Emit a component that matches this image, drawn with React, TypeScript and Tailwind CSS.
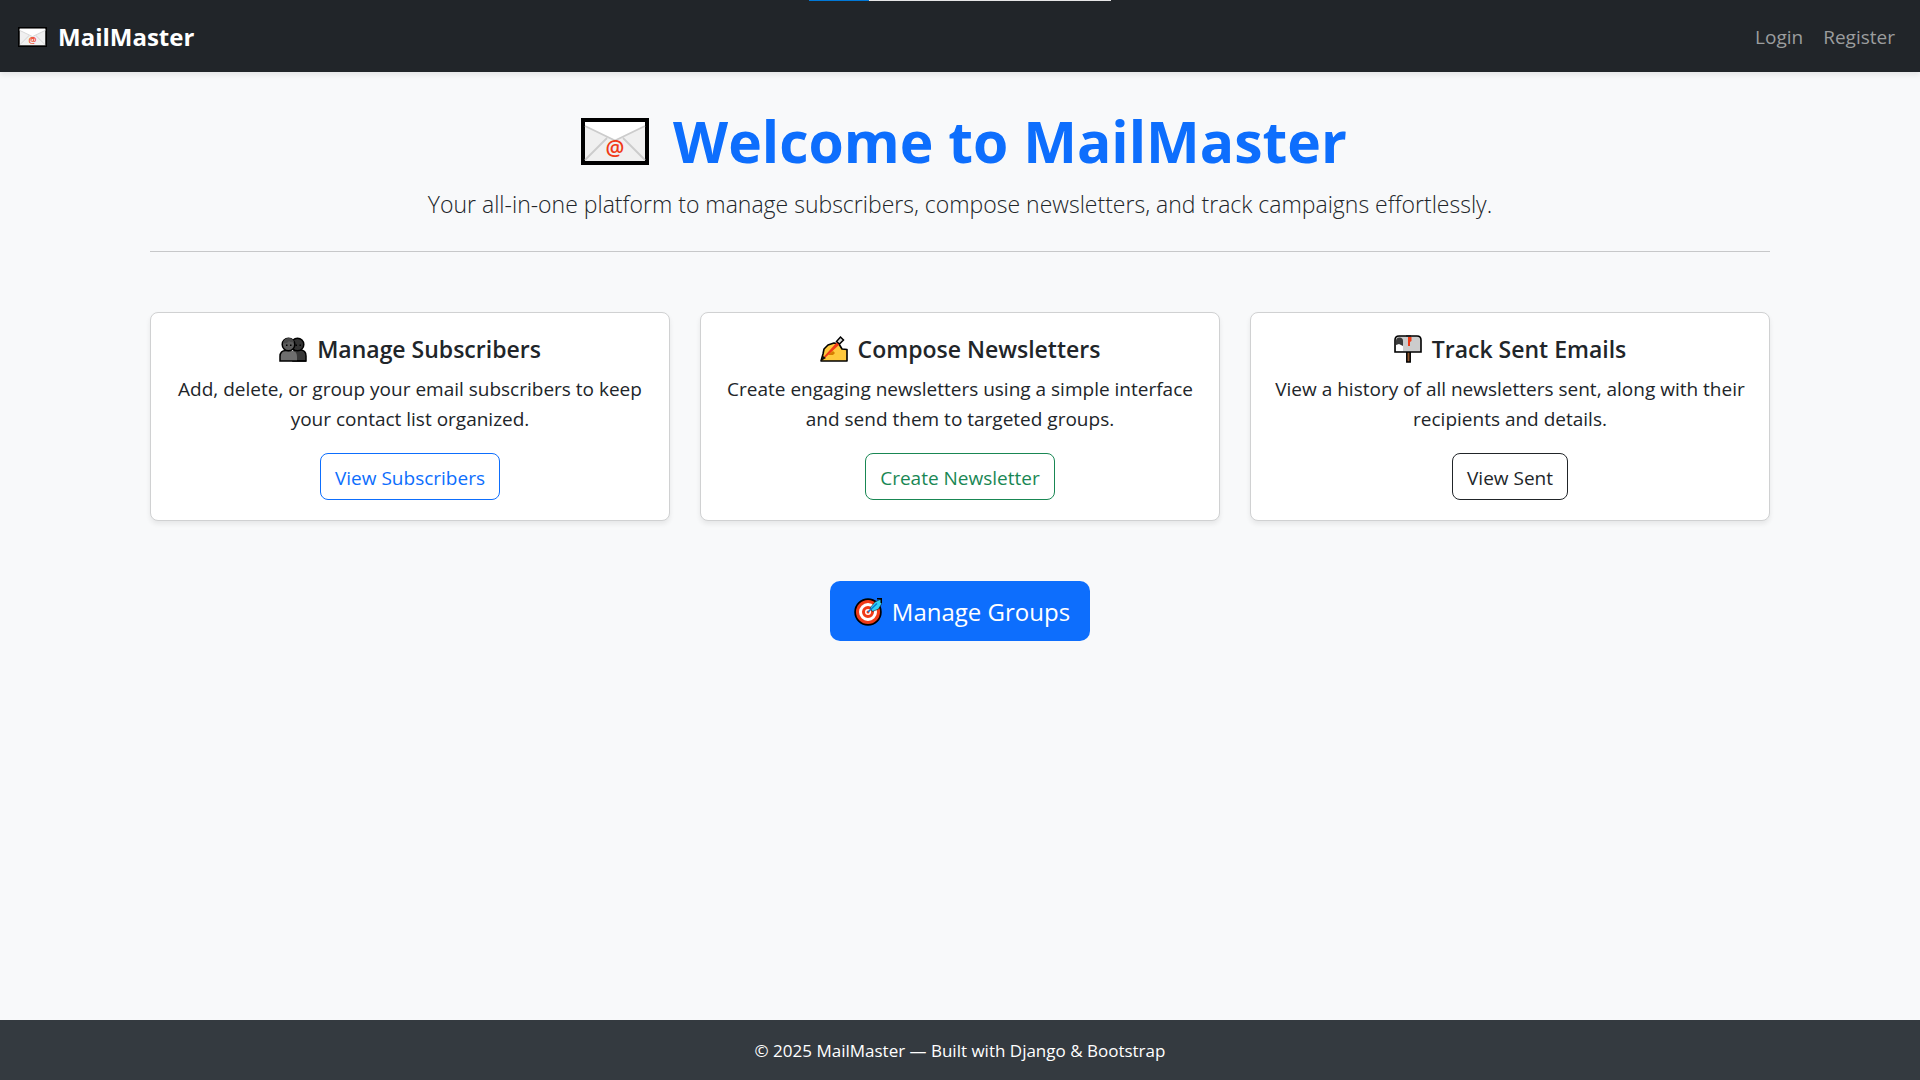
import type { ReactNode } from "react";

type IconProps = { className: string };

function Envelope({ className }: IconProps) {
  return (
    <svg viewBox="0 0 68 47" className={className} aria-hidden="true">
      <rect width="68" height="47" fill="#000" />
      <rect x="4" y="4" width="60" height="39" fill="#f0f0f0" />
      <path d="M4 4h60v4L34 23 4 8z" fill="#fff" />
      <path d="M4 8l30 14.500L64 8M4 42l22-22M64 42L42 20" fill="none" stroke="#ccc" strokeWidth="1.800" />
      <text x="34" y="38" textAnchor="middle" fontSize="21" fontWeight="600" fontFamily="Open Sans, sans-serif" fill="#f03a17">
        @
      </text>
    </svg>
  );
}

function People({ className }: IconProps) {
  return (
    <svg viewBox="0 0 28 28" className={className} aria-hidden="true">
      <path d="M15 15h6q6 0 6 6v5H14z" fill="#383838" stroke="#000" strokeWidth="1.500" />
      <circle cx="18.500" cy="9.500" r="6.300" fill="#333" stroke="#000" strokeWidth="1.500" />
      <path d="M1 26v-4.500q0-6 6-6h5q6 0 6 6V26z" fill="#6e6e6e" />
      <path d="M27 26H1v-4.500q0-6 6-6h5" fill="none" stroke="#000" strokeWidth="1.500" />
      <circle cx="9.500" cy="9.500" r="6.300" fill="#5c5c5c" stroke="#000" strokeWidth="1.500" />
      <path d="M4 8q1-5 6-5 4 0 5 4-3 1-5-1-2 3-6 2z" fill="#484848" />
      <path d="M7 9.500h1.500v1.500H7zM11 9.500h1.500v1.500H11zM16.500 9.500H18v1.500h-1.500zM20.500 9.500H22v1.500h-1.500z" fill="#000" />
    </svg>
  );
}

function WritingHand({ className }: IconProps) {
  return (
    <svg viewBox="0 0 28 28" className={className} aria-hidden="true">
      <path d="M1 26l2-7 1-5 4-4 6-2 5 1 3 5 5 .5V26z" fill="#ffc83d" stroke="#000" strokeWidth="1.600" strokeLinejoin="round" />
      <path d="M8 20l5-4 2 2-2 2H8z" fill="#d67d00" />
      <path d="M1.500 25.500l3-4.500L18 6l2.500 2.500L6 22z" fill="#f03a17" />
      <path d="M16.500 6.500L20.500 2l3 3-4 4z" fill="#ddd" stroke="#000" strokeWidth="1.500" />
      <path d="M1 26l2-5 3 2z" fill="#111" />
    </svg>
  );
}

function Mailbox({ className }: IconProps) {
  return (
    <svg viewBox="0 0 28 28" className={className} aria-hidden="true">
      <path d="M12.800 16h3.400v11h-3.400z" fill="#8e562e" stroke="#000" strokeWidth="1.500" />
      <path d="M1 17V5q0-4 4-4h18q4 0 4 4v12z" fill="#ccc" stroke="#000" strokeWidth="1.600" />
      <path d="M2 16V6q0-3.500 3.500-3.500T9 6v10z" fill="#3b3b3b" />
      <path d="M2 10l3-1 4 2v5H2z" fill="#fff" />
      <path d="M12 0h5v2h-5z" fill="#222" />
      <path d="M14 2h3.500v4L16 7v4h-2z" fill="#f03a17" />
    </svg>
  );
}

function Target({ className }: IconProps) {
  return (
    <svg viewBox="0 0 28 28" className={className} aria-hidden="true">
      <circle cx="14" cy="14" r="12.900" fill="#f03a17" stroke="#000" strokeWidth="1.700" />
      <circle cx="14" cy="14" r="7.500" fill="none" stroke="#fff" strokeWidth="3" />
      <circle cx="14" cy="14" r="3" fill="#fff" />
      <circle cx="14" cy="14" r="1.500" fill="#f03a17" />
      <path d="M16 10l5-6 6-3 .5 5-3 5-6 2.500z" fill="#31d2f7" stroke="#000" strokeWidth="0.500" />
      <path d="M23 0.700h4.300v4.300" fill="none" stroke="#000" strokeWidth="1.500" />
      <path d="M14 14l9-8.500" stroke="#0078d7" strokeWidth="1.500" />
    </svg>
  );
}

type FeatureProps = {
  icon: ReactNode;
  title: string;
  text: string;
  action: string;
  tone: string;
};

function Feature({ icon, title, text, action, tone }: FeatureProps) {
  return (
    <section className="flex flex-col items-center rounded-lg border border-[#d0d1d2] bg-white px-5 pt-[21px] pb-5 text-center shadow-[0_3px_5px_rgba(0,0,0,0.075)]">
      <h2 className="mb-2.5 flex items-center justify-center gap-2.5 text-[23px] leading-[30px] font-semibold">
        {icon}
        {title}
      </h2>
      <p className="mb-[19px] text-[19px] leading-[30px]">{text}</p>
      <a href="#" className={`rounded-lg border px-3.5 pt-[9px] pb-1.5 text-[19px] leading-[30px] ${tone}`}>
        {action}
      </a>
    </section>
  );
}

export default function App() {
  return (
    <div className="flex min-h-screen flex-col bg-[#f8f9fa] font-['Open_Sans',sans-serif] text-[#212529]">
      <div className="absolute inset-x-0 top-0 flex justify-center">
        <div className="flex h-px w-[302px] bg-[#e6e6e6]">
          <div className="w-1/5 bg-[#0078d7]" />
        </div>
      </div>
      <nav className="flex h-[72px] items-center justify-between bg-[#212529] pt-0.5 pr-[25px] pl-[18px] shadow-[0_3px_5px_rgba(0,0,0,0.075)]">
        <a href="#" className="flex items-center gap-[11px] text-[24px] leading-[36px] font-bold text-white">
          <Envelope className="h-5 w-[29px]" />
          MailMaster
        </a>
        <div className="flex gap-5 text-[19px] leading-[30px] text-[#9b9d9e]">
          <a href="#">Login</a>
          <a href="#">Register</a>
        </div>
      </nav>
      <main className="mx-auto w-full max-w-[1650px] flex-1 px-[15px] pt-[33px]">
        <header className="border-b border-[#c7c8c9] pb-7 text-center">
          <h1 className="mb-2 flex items-center justify-center gap-6 pl-2 text-[57px] leading-[72px] font-bold text-[#0d6efd]">
            <Envelope className="h-[47px] w-[68px]" />
            Welcome to MailMaster
          </h1>
          <p className="text-[23px] leading-[38px] font-light">
            Your all-in-one platform to manage subscribers, compose newsletters, and track campaigns effortlessly.
          </p>
        </header>
        <div className="mt-15 grid grid-cols-3 gap-[30px]">
          <Feature
            icon={<People className="size-7" />}
            title="Manage Subscribers"
            text="Add, delete, or group your email subscribers to keep your contact list organized."
            action="View Subscribers"
            tone="border-[#0d6efd] text-[#0d6efd]"
          />
          <Feature
            icon={<WritingHand className="size-7" />}
            title="Compose Newsletters"
            text="Create engaging newsletters using a simple interface and send them to targeted groups."
            action="Create Newsletter"
            tone="border-[#198754] text-[#198754]"
          />
          <Feature
            icon={<Mailbox className="size-7" />}
            title="Track Sent Emails"
            text="View a history of all newsletters sent, along with their recipients and details."
            action="View Sent"
            tone="border-[#212529] text-[#212529]"
          />
        </div>
        <div className="mt-15 flex justify-center">
          <a href="#" className="flex items-center gap-2.5 rounded-[10px] bg-[#0d6efd] pt-3 pb-2.5 pr-5 pl-6 text-[24px] leading-[38px] text-white">
            <Target className="size-7" />
            Manage Groups
          </a>
        </div>
      </main>
      <footer className="bg-[#343a40] pt-4 pb-3.5 text-center text-[17px] leading-[30px] text-white">
        © 2025 MailMaster — Built with Django &amp; Bootstrap
      </footer>
    </div>
  );
}
